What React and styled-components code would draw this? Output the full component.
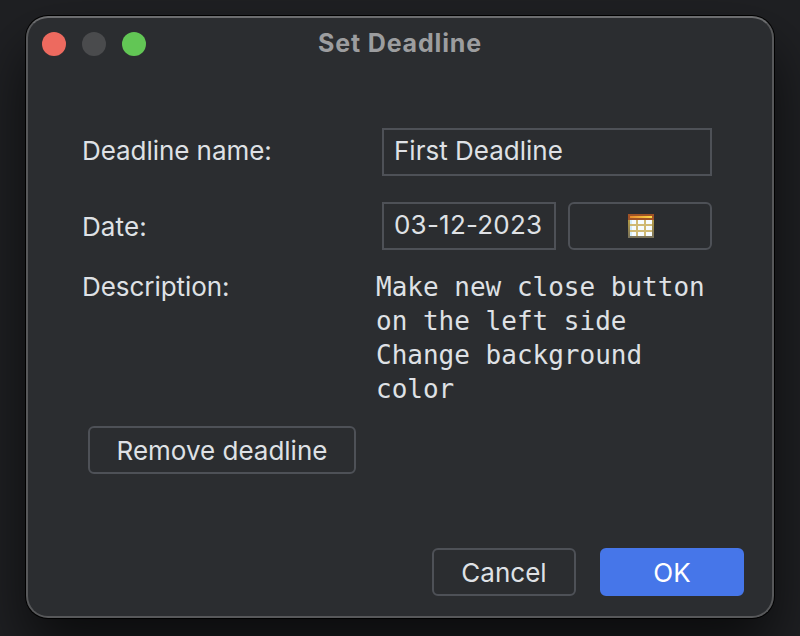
import React from "react";
import styled, { createGlobalStyle } from "styled-components";

const GlobalStyle = createGlobalStyle`
  *, *::before, *::after { box-sizing: border-box; }
  html, body { margin: 0; background: #1e1f22; overflow: hidden; }
`;

const Desktop = styled.main`
  width: 800px;
  height: 636px;
  padding: 16px 26px 18px;
  overflow: hidden;
  background: #1f2023;
  color: #dfe1e5;
  font: 400 26px/32px Inter, sans-serif;
`;

const Dialog = styled.section`
  display: flex;
  flex-direction: column;
  height: 602px;
  border: 2px solid #57585a;
  border-top-color: #6c6d6f;
  border-radius: 22px;
  background: #2b2d30;
  box-shadow: 0 0 0 1px #000, 0 32px 60px rgba(0, 0, 0, 0.65);
`;

const TitleBar = styled.header`
  display: grid;
  grid-template-columns: 1fr auto 1fr;
  align-items: center;
  height: 52px;
  padding: 0 14px;
`;

const WindowControls = styled.div`
  display: flex;
  gap: 16px;
`;

const Control = styled.span`
  width: 24px;
  height: 24px;
  border-radius: 50%;
  background: ${({ $color }) => $color};
`;

const Title = styled.h1`
  margin: -2px 0 0;
  color: #9c9d9f;
  font-size: 25px;
  line-height: 32px;
  font-weight: 700;
  letter-spacing: 0.83px;
`;

const Form = styled.div`
  display: grid;
  grid-template-columns: 300px 330px;
  grid-template-rows: 48px 48px 136px;
  row-gap: 26px;
  margin: 58px 0 0 54px;
`;

const Label = styled.label`
  margin-top: ${({ $top }) => $top}px;
  letter-spacing: ${({ $spacing = -0.06 }) => $spacing}px;
`;

const Field = styled.div`
  height: 48px;
  padding: 5px 10px;
  border: 2px solid #4e5157;
  letter-spacing: ${({ $spacing = 0 }) => $spacing}px;
  white-space: nowrap;
`;

const DateRow = styled.div`
  display: grid;
  grid-template-columns: 174px 144px;
  gap: 12px;
`;

const Button = styled.button`
  display: flex;
  align-items: center;
  justify-content: center;
  width: ${({ $width = 144 }) => $width}px;
  height: 48px;
  padding: 2px 0 0;
  border: 2px solid ${({ $primary }) => ($primary ? "#4676e9" : "#4e5157")};
  border-radius: 6px;
  background: ${({ $primary }) => ($primary ? "#4676e9" : "transparent")};
  color: ${({ $primary }) => ($primary ? "#fff" : "#dfe1e5")};
  font: inherit;
`;

const IconButton = styled(Button)`
  padding: 0 0 0 2px;
`;

const Description = styled.p`
  margin: -6px 0 0 -6px;
  font: 26px/34px "DejaVu Sans Mono", monospace;
  white-space: pre;
`;

const RemoveRow = styled.div`
  margin: 14px 0 0 60px;
`;

const Footer = styled.footer`
  display: flex;
  justify-content: flex-end;
  gap: 24px;
  margin-top: auto;
  padding: 0 28px 20px 0;
`;

function CalendarIcon() {
  return (
    <svg width="26" height="24" viewBox="0 0 26 24" shapeRendering="crispEdges" aria-hidden="true">
      <defs>
        <linearGradient id="frame" x1="0" y1="0" x2="0" y2="1">
          <stop offset="0" stopColor="#b39a45" />
          <stop offset="1" stopColor="#77715c" />
        </linearGradient>
        <linearGradient id="head" x1="0" x2="1">
          <stop offset="0" stopColor="#e88a2b" />
          <stop offset="1" stopColor="#ffdc45" />
        </linearGradient>
      </defs>
      <path fill="url(#frame)" d="M0 6h26v18H0z" />
      <path fill="#a05226" d="M0 0h26v6H0z" />
      <path fill="url(#head)" d="M2 2h22v2H2z" />
      <path fill="#cfb974" d="M2 6h22v16H2z" />
      <path fill="#f6fbff" d="M2 6h6v4H2zM10 6h6v4h-6zM18 6h6v4h-6zM2 12h6v4H2zM10 12h6v4h-6zM18 12h6v4h-6zM2 18h6v4H2zM10 18h6v4h-6zM18 18h6v4h-6z" />
      <path fill="#d3ecf9" d="M2 6h2v4H2zM2 12h2v4H2zM2 18h2v4H2z" />
    </svg>
  );
}

export default function App() {
  return (
    <Desktop>
      <GlobalStyle />
      <Dialog>
        <TitleBar>
          <WindowControls>
            <Control $color="#ed6a5f" />
            <Control $color="#4a4b4d" />
            <Control $color="#62c655" />
          </WindowControls>
          <Title>Set Deadline</Title>
        </TitleBar>
        <Form>
          <Label $top={7}>Deadline name:</Label>
          <Field>First Deadline</Field>
          <Label $top={9} $spacing={0.1}>Date:</Label>
          <DateRow>
            <Field $spacing={0.22}>03-12-2023</Field>
            <IconButton aria-label="Choose date"><CalendarIcon /></IconButton>
          </DateRow>
          <Label $top={-5}>Description:</Label>
          <Description>{"Make new close button\non the left side\nChange background\ncolor"}</Description>
        </Form>
        <RemoveRow>
          <Button $width={268}>Remove deadline</Button>
        </RemoveRow>
        <Footer>
          <Button>Cancel</Button>
          <Button $primary>OK</Button>
        </Footer>
      </Dialog>
    </Desktop>
  );
}
